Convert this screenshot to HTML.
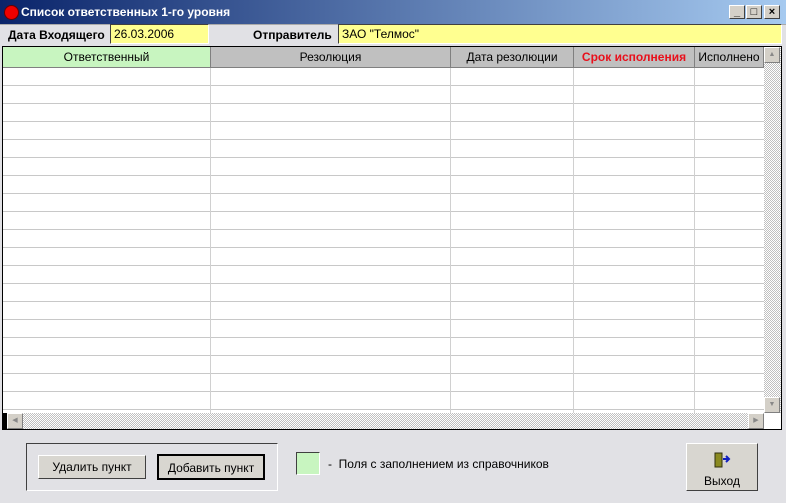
<!DOCTYPE html>
<html><head><meta charset="utf-8"><style>
*{margin:0;padding:0;box-sizing:border-box}
body{width:786px;height:503px;background:#e1e1e5;font-family:"Liberation Sans","DejaVu Sans",sans-serif;font-size:12px;position:relative;overflow:hidden}
.abs{position:absolute}
.title{left:0;top:0;width:786px;height:25px;background:linear-gradient(90deg,#0a246a,#a6caf0);border-bottom:1px solid #aaa}
.title span{position:absolute;left:21px;top:5px;color:#fff;font-weight:bold;font-size:12px}
.dot{left:4px;top:5px;width:15px;height:15px;background:#e00;border-radius:50%;border:1px solid #600}
.wb{top:5px;width:16px;height:14px;background:#d4d0c8;border:1px solid;border-color:#fff #404040 #404040 #fff;font-size:11px;font-weight:bold;text-align:center;line-height:12px}
.lbl{font-weight:bold;font-size:12px}
.inp{background:#ffff90;border:1px solid;border-color:#404040 #fff #fff #404040;font-size:12px;padding:2px 0 0 3px}
.grid{left:2px;top:46px;width:780px;height:384px;border:1px solid #000;background:#fff}
.hdr{position:absolute;top:0;height:21px;background:#c0c0c0;border-right:1px solid #808080;border-bottom:1px solid #808080;text-align:center;line-height:21px;font-size:12px}
.rows{position:absolute;left:0;top:21px;width:761px;height:345px;background:repeating-linear-gradient(180deg,#fff 0,#fff 17px,#c8c8c8 17px,#c8c8c8 18px)}
.vl{position:absolute;top:21px;width:1px;height:345px;background:#d0d0d0}
.vs{position:absolute;left:761px;top:0;width:17px;height:366px;background:repeating-conic-gradient(#c0c0c0 0 25%,#fff 0 50%) 0 0/2px 2px}
.hs{position:absolute;left:0;top:366px;width:761px;height:16px;background:repeating-conic-gradient(#c0c0c0 0 25%,#fff 0 50%) 0 0/2px 2px}
.sb{position:absolute;width:16px;height:16px;background:#d4d0c8;border:1px solid;border-color:#fff #808080 #808080 #fff;color:#888;font-size:7px;text-align:center;line-height:14px}
.btn{background:#d8d6d0;border:1px solid;border-color:#fff #404040 #404040 #fff;text-align:center;font-size:12px}
</style></head><body>
<div class="abs title"><div class="abs dot"></div><span>Список ответственных 1-го уровня</span>
<div class="abs wb" style="left:729px">_</div><div class="abs wb" style="left:746px">□</div><div class="abs wb" style="left:764px">×</div></div>
<div class="abs lbl" style="left:8px;top:28px">Дата Входящего</div>
<div class="abs inp" style="left:110px;top:24px;width:99px;height:20px">26.03.2006</div>
<div class="abs lbl" style="left:253px;top:28px">Отправитель</div>
<div class="abs inp" style="left:338px;top:24px;width:444px;height:20px">ЗАО "Телмос"</div>
<div class="abs grid">
<div class="hdr" style="left:0;width:208px;background:#c8f5c0">Ответственный</div>
<div class="hdr" style="left:208px;width:240px">Резолюция</div>
<div class="hdr" style="left:448px;width:123px">Дата резолюции</div>
<div class="hdr" style="left:571px;width:121px;color:#e8101c;font-weight:bold">Срок исполнения</div>
<div class="hdr" style="left:692px;width:69px">Исполнено</div>
<div class="rows"></div>
<div class="vl" style="left:207px"></div><div class="vl" style="left:447px"></div><div class="vl" style="left:570px"></div><div class="vl" style="left:691px"></div>
<div class="vs"><div class="sb" style="left:0;top:0">▲</div><div class="sb" style="left:0;top:350px">▼</div></div>
<div class="hs"><div style="position:absolute;left:0;top:0;width:4px;height:16px;background:#000"></div><div class="sb" style="left:4px;top:0">◀</div><div class="sb" style="left:745px;top:0">▶</div></div>
<div style="position:absolute;left:761px;top:366px;width:17px;height:16px;background:#fff"></div>
</div>
<div class="abs" style="left:26px;top:443px;width:252px;height:48px;border:1px solid;border-color:#404040 #fff #fff #404040"></div>
<div class="abs btn" style="left:38px;top:455px;width:108px;height:24px;line-height:22px">Удалить пункт</div>
<div class="abs btn" style="left:157px;top:454px;width:108px;height:26px;line-height:24px;border:2px solid #000">Добавить пункт</div>
<div class="abs" style="left:296px;top:452px;width:24px;height:23px;background:#c8f5c0;border:1px solid;border-color:#404040 #fff #fff #404040"></div>
<div class="abs" style="left:328px;top:457px">-&nbsp; Поля с заполнением из справочников</div>
<div class="abs btn" style="left:686px;top:443px;width:72px;height:48px">
<svg width="20" height="20" style="position:absolute;left:25px;top:7px"><rect x="3" y="2" width="7" height="14" fill="#8a8a20" stroke="#303010"/><path d="M11 8h6M14 5l3 3-3 3" stroke="#1020c0" stroke-width="2" fill="none"/></svg>
<div style="position:absolute;left:0;top:30px;width:70px;text-align:center">Выход</div></div>
</body></html>
